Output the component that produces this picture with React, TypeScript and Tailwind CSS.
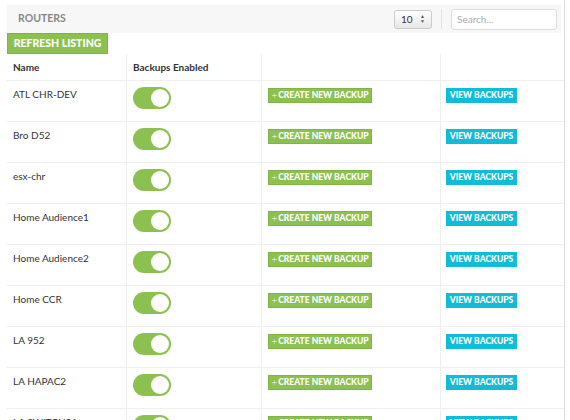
import React from "react";

const routers = [
  "ATL CHR-DEV",
  "Bro D52",
  "esx-chr",
  "Home Audience1",
  "Home Audience2",
  "Home CCR",
  "LA 952",
  "LA HAPAC2",
  "LA SWITCH01",
];

function Toggle() {
  return (
    <div className="flex h-[22px] w-[38px] items-center justify-end rounded-full bg-[#8cc152] pr-[2px]">
      <div className="h-[18px] w-[18px] rounded-full bg-white" />
    </div>
  );
}

export default function App() {
  return (
    <div
      className="h-[420px] w-[570px] overflow-hidden bg-white text-[#333]"
      style={{ fontFamily: "Lato, 'Open Sans', sans-serif" }}
    >
      <div className="ml-[7px] h-full w-[558px] border-r border-[#dcdcdc] pt-[5px]">
        <div className="mr-[3px] flex h-[28px] items-center bg-[#f7f7f7] pl-[11px] pr-[4px]">
          <span className="text-[10.5px] font-bold text-[#888]">ROUTERS</span>
          <div className="ml-auto flex h-[19px] w-[38px] items-center justify-between rounded-[3px] border border-[#ccc] bg-gradient-to-b from-white to-[#e8e8e8] px-[6px] text-[10px] text-[#333]">
            <span>10</span>
            <span className="flex flex-col text-[5px] leading-[5px] text-[#555]">
              <span>▲</span>
              <span>▼</span>
            </span>
          </div>
          <div className="mx-[9px] h-[20px] w-px bg-[#e2e2e2]" />
          <div className="flex h-[21px] w-[106px] items-center rounded-[3px] border border-[#ddd] bg-white px-[5px] text-[10px] text-[#aaa]">
            Search...
          </div>
        </div>

        <button className="flex h-[21px] w-[101px] items-center justify-center border border-[#7fb446] bg-[#8cc152] text-[10.5px] font-black text-white">
          REFRESH LISTING
        </button>

        <div className="grid grid-cols-[119px_135px_179px_1fr] text-[10px]">
          <div className="flex h-[27px] items-center border-b border-[#eee] pl-[6px] font-bold">Name</div>
          <div className="flex h-[27px] items-center border-b border-l border-[#eee] pl-[6px] font-bold">
            Backups Enabled
          </div>
          <div className="h-[27px] border-b border-l border-[#eee]" />
          <div className="h-[27px] border-b border-l border-[#eee]" />

          {routers.map((name) => (
            <React.Fragment key={name}>
              <div className="h-[41px] border-b border-[#eee] pl-[6px] pt-[6px]">{name}</div>
              <div className="h-[41px] border-b border-l border-[#eee] pl-[6px] pt-[6px]">
                <Toggle />
              </div>
              <div className="h-[41px] border-b border-l border-[#eee] pl-[6px] pt-[7px]">
                <div className="flex h-[15px] w-[104px] items-center justify-center border border-[#7fb446] bg-[#8cc152] text-[8.5px] font-black text-white">
                  <span className="mr-[1px] text-[10px] font-light">+</span>CREATE NEW BACKUP
                </div>
              </div>
              <div className="h-[41px] border-b border-l border-[#eee] pl-[5px] pt-[7px]">
                <div className="flex h-[15px] w-[71px] items-center justify-center bg-[#12bcd6] text-[8.5px] font-black text-white">
                  VIEW BACKUPS
                </div>
              </div>
            </React.Fragment>
          ))}
        </div>
      </div>
    </div>
  );
}
